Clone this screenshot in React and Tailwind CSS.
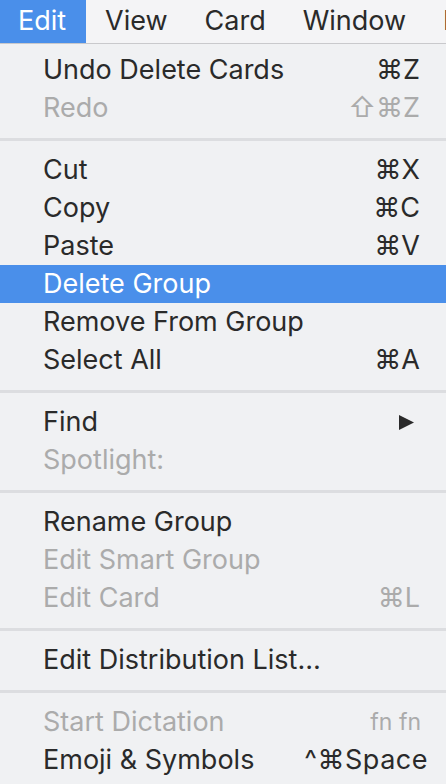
import React from 'react'

const FONT = { fontFamily: 'Inter, "Open Sans", "DejaVu Sans", sans-serif' }

// menu model: 'sep' for separators
const items = [
  { label: 'Undo Delete Cards', key: '⌘Z' },
  { label: 'Redo', key: '⇧⌘Z', disabled: true },
  'sep',
  { label: 'Cut', key: '⌘X' },
  { label: 'Copy', key: '⌘C' },
  { label: 'Paste', key: '⌘V' },
  { label: 'Delete Group', active: true },
  { label: 'Remove From Group' },
  { label: 'Select All', key: '⌘A' },
  'sep',
  { label: 'Find', submenu: true },
  { label: 'Spotlight:', disabled: true },
  'sep',
  { label: 'Rename Group' },
  { label: 'Edit Smart Group', disabled: true },
  { label: 'Edit Card', key: '⌘L', disabled: true },
  'sep',
  { label: 'Edit Distribution List…' },
  'sep',
  { label: 'Start Dictation', key: 'fn fn', disabled: true, small: true },
  { label: 'Emoji & Symbols', key: '^⌘Space', wide: true },
]

function MenuRow({ item }) {
  const color = item.active
    ? 'text-white bg-[#4a8fea]'
    : item.disabled
    ? 'text-[#ababab]'
    : 'text-[#2a2a2a]'
  let keyCls = 'text-[27px]'
  if (item.small) keyCls = 'text-[23px] mr-[-1px]'
  if (item.wide) keyCls = 'text-[27px] mr-[-8px] tracking-[0.5px]'
  return (
    <div className={`h-[38px] flex items-center justify-between pl-[43px] pr-[26px] whitespace-nowrap ${color}`}>
      <span className="text-[27px]">{item.label}</span>
      {item.key && <span className={keyCls}>{item.key}</span>}
      {item.submenu && (
        <svg width="17" height="17" viewBox="0 0 17 17" className="mr-[5px]">
          <path d="M1 1 L16 8.5 L1 16 Z" fill="#2a2a2a" />
        </svg>
      )}
    </div>
  )
}

export default function App() {
  return (
    <div className="w-[446px] h-[784px] overflow-hidden bg-[#f0f1f3]" style={FONT}>
      {/* Menu bar */}
      <div className="h-[44px] flex items-stretch bg-[#f4f4f6] border-b border-[#c9c9cc] text-[27px] text-[#2a2a2a] whitespace-nowrap overflow-hidden">
        <div className="w-[86px] shrink-0 bg-[#4a8fea] text-white flex items-center pl-[18px]">Edit</div>
        <div className="flex items-center pl-[19px] gap-[37px]">
          <span>View</span>
          <span>Card</span>
          <span>Window</span>
          <span>Help</span>
        </div>
      </div>

      {/* Dropdown */}
      <div className="pt-[7px] pb-[5px]">
        {items.map((item, i) =>
          item === 'sep' ? (
            <div key={i} className="h-[24px] flex items-center">
              <div className="w-full h-[3px] bg-[#dcdde0]" />
            </div>
          ) : (
            <MenuRow key={i} item={item} />
          )
        )}
      </div>
    </div>
  )
}
